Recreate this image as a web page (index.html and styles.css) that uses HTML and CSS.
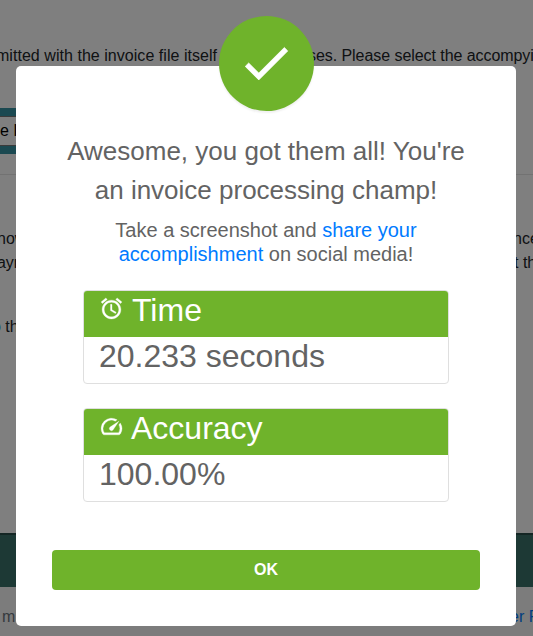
FILE: index.html
```html
<!DOCTYPE html>
<html lang="en">
<head>
<meta charset="utf-8">
<title>Invoice processing</title>
<link rel="stylesheet" href="styles.css">
</head>
<body>
<div class="page">
  <p class="intro"><span class="cut">mitted with the invoice file itself f</span><span>ses. Please select the accompying</span></p>
  <div class="toolbar"><div class="field">e I</div></div>
  <hr class="rule">
  <div class="copy">
    <p class="row"><span class="left">now</span><span>nce</span></p>
    <p class="row"><span class="left wide">payment</span><span>t the</span></p>
    <p class="row last"><span class="left last-left"><a>o</a> the</span></p>
  </div>
  <div class="band"></div>
  <footer class="footer"><span class="made">m</span><a class="privacy">er Policy</a></footer>
</div>
<div class="overlay">
  <main class="modal">
    <div class="badge">
      <svg width="58" height="58" viewBox="0 0 24 24" fill="#fff" stroke="#fff" stroke-width=".3"><path d="M9 16.17 4.83 12l-1.42 1.41L9 19 21 7l-1.41-1.41z"/></svg>
    </div>
    <h1 class="title">Awesome, you got them all! You're<br>an invoice processing champ!</h1>
    <p class="subtitle">Take a screenshot and <a>share your<br>accomplishment</a> on social media!</p>
    <section class="card">
      <h2 class="card-head"><svg class="icon" viewBox="0 0 24 24"><path d="M22 5.72l-4.6-3.86-1.29 1.53 4.6 3.86L22 5.72zM7.88 3.39L6.6 1.86 2 5.71l1.29 1.53 4.59-3.85zM12.5 8H11v6l4.75 2.85.75-1.23-4-2.37V8zM12 4c-4.97 0-9 4.03-9 9s4.02 9 9 9c4.97 0 9-4.03 9-9s-4.03-9-9-9zm0 16c-3.87 0-7-3.13-7-7s3.13-7 7-7 7 3.13 7 7-3.13 7-7 7z"/></svg><span>Time</span></h2>
      <div class="card-body">20.233 seconds</div>
    </section>
    <section class="card accuracy">
      <h2 class="card-head"><svg class="icon" viewBox="0 0 24 24"><path d="M20.38 8.57l-1.23 1.85a8 8 0 0 1-.22 7.58H5.07A8 8 0 0 1 15.58 6.85l1.85-1.23A10 10 0 0 0 3.35 19a2 2 0 0 0 1.72 1h13.85a2 2 0 0 0 1.74-1 10 10 0 0 0-.27-10.44zm-9.79 6.84a2 2 0 0 0 2.83 0l5.66-8.49-8.49 5.66a2 2 0 0 0 0 2.83z"/></svg><span>Accuracy</span></h2>
      <div class="card-body">100.00%</div>
    </section>
    <button class="ok">OK</button>
  </main>
</div>
</body>
</html>
```
FILE: styles.css
```css
* { box-sizing: border-box; }
body {
  margin: 0;
  height: 636px;
  overflow: hidden;
  position: relative;
  font: 16px/24px "Liberation Sans", Arial, sans-serif;
  color: #212529;
  background: #fff;
}
p, h1, h2 { margin: 0; font-weight: 400; }
a { color: #007bff; }
.page { height: 636px; overflow: hidden; display: flex; flex-direction: column; }
.intro { display: flex; margin-top: 44px; white-space: nowrap; }
.cut { width: 312px; margin-left: -4px; flex: none; letter-spacing: .04px; }
.intro span + span { letter-spacing: -.06px; }
.toolbar { width: 266px; margin-top: 40px; height: 46px; padding: 8px 0; background: #3793a3; }
.field { height: 30px; border: solid #767676; border-width: 1px 0; background: #fff; color: #000; line-height: 28px; }
.rule { width: 100%; height: 1px; margin: 20px 0 0; border: 0; background: #e5e5e5; }
.copy { margin-top: 52px; height: 306px; }
.row { display: flex; white-space: nowrap; }
.left { width: 516px; flex: none; margin-left: -3px; }
.wide { margin-left: -12px; width: 526px; }
.last { margin-top: 40px; }
.last-left { margin-left: -8px; }
.band { height: 54px; background: #3a736a; border-top: 2px solid #294c49; flex: none; }
.footer { flex: 1; padding-top: 18px; background: #f8f8f8; display: flex; white-space: nowrap; color: #6c757d; }
.made { margin-left: 2px; width: 508px; flex: none; }
.overlay {
  position: absolute;
  inset: 0;
  padding: 66px 17px 10px 16px;
  background: rgba(0, 0, 0, .5);
}
.modal {
  position: relative;
  height: 560px;
  padding: 66px 36px 36px;
  border-radius: 5px;
  background: #fff;
  color: #636363;
  display: flex;
  flex-direction: column;
}
.badge {
  position: absolute;
  top: -50px;
  left: 203px;
  width: 95px;
  height: 95px;
  border-radius: 50%;
  background: #6fb32b;
  box-shadow: 0 2px 2px rgba(0, 0, 0, .06);
  display: flex;
  align-items: center;
  justify-content: center;
}
.badge svg { margin: -1px 2px 0 0; }
.title { font-size: 26px; line-height: 39px; text-align: center; white-space: nowrap; }
.subtitle { margin-top: 8px; font-size: 20px; text-align: center; white-space: nowrap; }
.card {
  margin: 24px 31px 0;
  height: 94px;
  border: 1px solid #dfdfdf;
  border-radius: 4px;
  overflow: hidden;
  flex: none;
}
.card-head {
  height: 46px;
  padding-left: 15px;
  background: #6fb32b;
  color: #fff;
  font-size: 32px;
  line-height: 38px;
  display: flex;
  align-items: flex-start;
  gap: 8px;
}
.icon { width: 25px; height: 25px; margin-top: 5px; fill: #fff; stroke: #fff; stroke-width: .3; flex: none; }
.accuracy .card-head { gap: 7px; }
.card-body { padding-left: 15px; font-size: 32px; line-height: 38px; }
.ok {
  margin-top: auto;
  height: 40px;
  border: 0;
  border-radius: 4px;
  background: #6fb32b;
  color: #fff;
  padding: 0 0 1px;
  font: 700 16px/24px "Liberation Sans", Arial, sans-serif;
}
```
